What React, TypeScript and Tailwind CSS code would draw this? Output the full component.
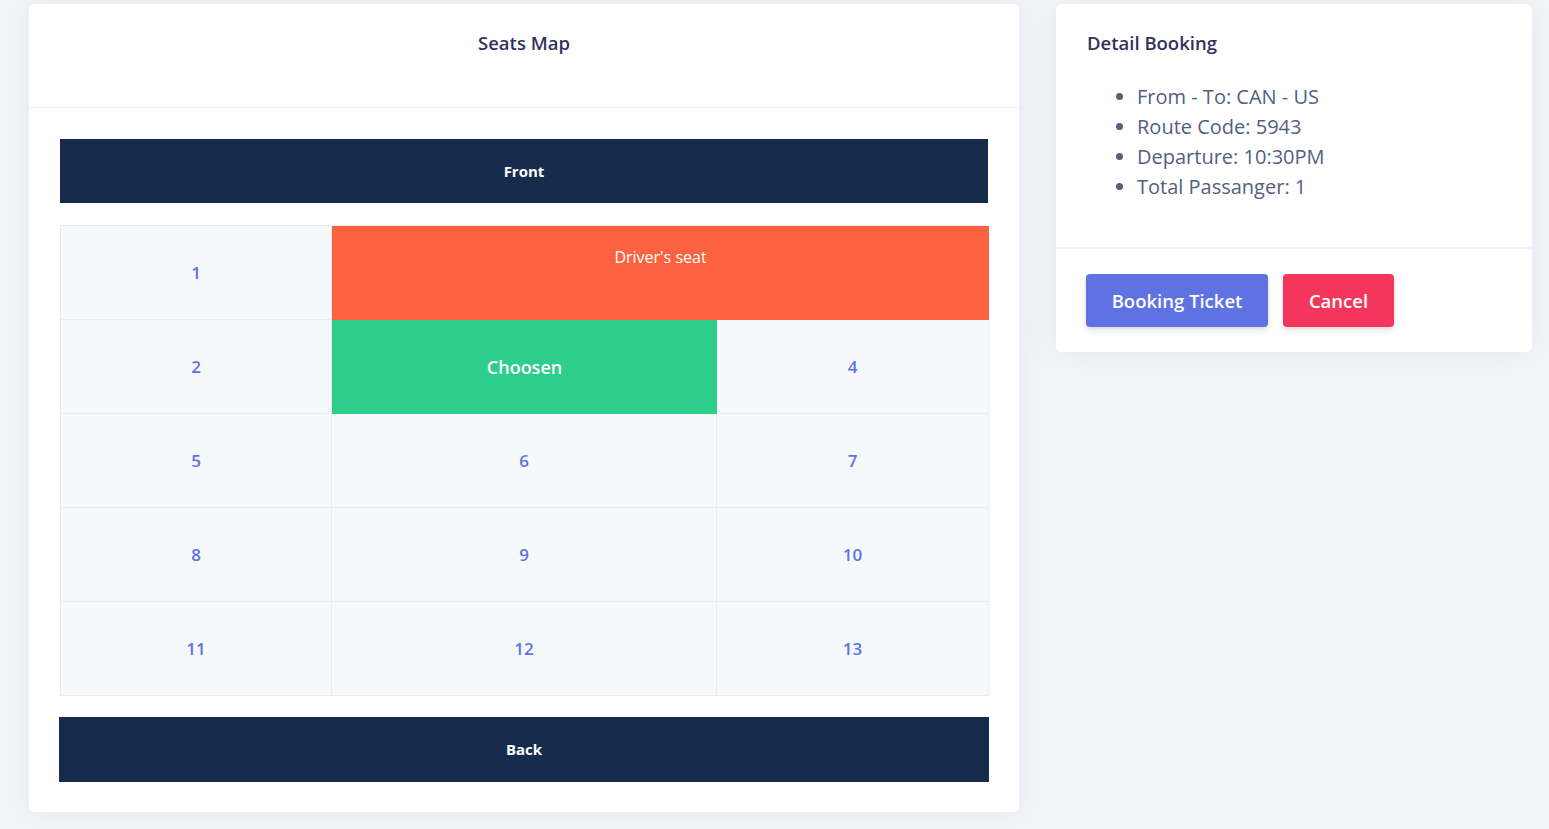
import React from 'react';

const rows: string[][] = [
  ['2', 'Choosen', '4'],
  ['5', '6', '7'],
  ['8', '9', '10'],
  ['11', '12', '13'],
];

function SeatCell({ label }: { label: string }) {
  if (label === 'Choosen') {
    return (
      <div className="flex items-center justify-center bg-[#2dce89] text-[18px] font-semibold text-white">
        {label}
      </div>
    );
  }
  return (
    <div className="flex items-center justify-center border-b border-r border-[#e9ecef] bg-[#f6f9fc] text-[17px] font-semibold text-[#5e72e4]">
      {label}
    </div>
  );
}

export default function App() {
  return (
    <div
      className="min-h-screen bg-[#f3f4f9] text-[#525f7f]"
      style={{ fontFamily: '"Open Sans", sans-serif' }}
    >
      <div className="flex items-start gap-[37px] pl-[29px] pt-[4px]">
        {/* seats map card */}
        <div className="w-[990px] rounded-md bg-white shadow-[0_0_32px_rgba(136,152,170,0.12)]">
          <div className="h-[104px] border-b border-[#eef0f4] pt-[24px] text-center">
            <h2 className="text-[18.5px] font-semibold leading-[30px] text-[#32325d]">Seats Map</h2>
          </div>
          <div className="px-[31px] pb-[30px] pt-[31px]">
            <div className="flex h-[64px] items-center justify-center bg-[#172b4d] text-[15px] font-bold text-white">
              Front
            </div>
            <div className="mt-[22px] grid grid-cols-[271px_385px_272px] grid-rows-[94px_94px_94px_94px_94px] border-l border-t border-[#e9ecef]">
              <SeatCell label="1" />
              <div className="col-span-2 flex justify-center bg-[#fb6340] pt-[19px] text-[16px] text-white">
                Driver's seat
              </div>
              {rows.map((r) => r.map((c) => <SeatCell key={c} label={c} />))}
            </div>
            <button className="mt-[21px] -mx-px flex h-[65px] w-[930px] items-center justify-center bg-[#172b4d] text-[15px] font-bold text-white">
              Back
            </button>
          </div>
        </div>

        {/* detail booking card */}
        <div className="w-[476px] rounded-md bg-white shadow-[0_0_32px_rgba(136,152,170,0.12)]">
          <div className="border-b-2 border-[#f1f3f7] px-[31px] pb-[45px] pt-[24px]">
            <h3 className="text-[18.5px] font-semibold leading-[30px] text-[#32325d]">Detail Booking</h3>
            <ul className="mt-[24px] list-disc pl-[50px] text-[20px] leading-[30px] text-[#525f7f] marker:text-[#525f7f]">
              <li>From - To: CAN - US</li>
              <li>Route Code: 5943</li>
              <li>Departure: 10:30PM</li>
              <li>Total Passanger: 1</li>
            </ul>
          </div>
          <div className="flex gap-[15px] px-[30px] py-[25px]">
            <button className="h-[53px] w-[182px] rounded bg-[#5e72e4] text-[18.5px] font-semibold text-white shadow-[0_4px_6px_rgba(50,50,93,0.11),0_1px_3px_rgba(0,0,0,0.08)]">
              Booking Ticket
            </button>
            <button className="h-[53px] w-[111px] rounded bg-[#f5365c] text-[18.5px] font-semibold text-white shadow-[0_4px_6px_rgba(50,50,93,0.11),0_1px_3px_rgba(0,0,0,0.08)]">
              Cancel
            </button>
          </div>
        </div>
      </div>
    </div>
  );
}
